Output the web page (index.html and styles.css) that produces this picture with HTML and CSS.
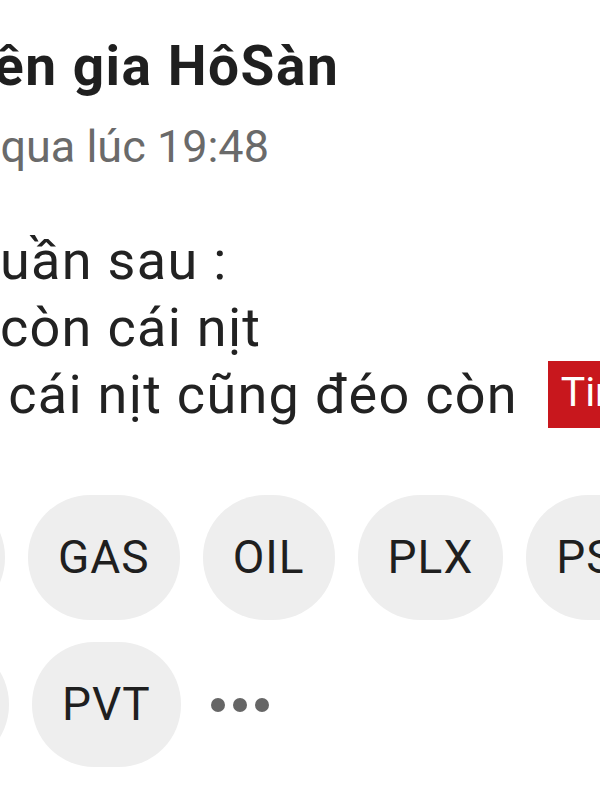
FILE: index.html
```html
<!DOCTYPE html>
<html lang="vi">
<head>
    <meta charset="UTF-8">
    <meta name="viewport" content="width=device-width, initial-scale=1.0">
    <title>Chuyên gia HôSàn</title>
    <link rel="stylesheet" href="styles.css">
</head>
<body>

<div class="post">
    <div class="post-head">
        <div class="author">Chuyên gia HôSàn</div>
        <div class="time">Hôm qua lúc 19:48</div>
    </div>
    <div class="post-body">
        <div class="line">Tuần sau :</div>
        <div class="line">- còn cái nịt</div>
        <div class="line">* cái nịt cũng đéo còn <span class="tag">Tin nóng</span></div>
    </div>
    <div class="tickers">
        <div class="chip-row first">
            <span class="chip cut">BSR</span>
            <span class="chip">GAS</span>
            <span class="chip">OIL</span>
            <span class="chip">PLX</span>
            <span class="chip">PSH</span>
        </div>
        <div class="chip-row second">
            <span class="chip cut">PVS</span>
            <span class="chip">PVT</span>
            <span class="more"><i></i><i></i><i></i></span>
        </div>
    </div>
</div>

</body>
</html>
```

FILE: styles.css
```css
html, body {
    margin: 0;
    overflow: hidden;
}
body {
    font-family: Roboto, "Liberation Sans", sans-serif;
    background: #ffffff;
    color: #222222;
    width: 600px;
    height: 800px;
}
.post {
    white-space: nowrap;
}
.post-head {
    padding-top: 31px;
}
.author {
    margin-left: -137px;
    font-size: 55px;
    font-weight: 700;
    letter-spacing: 1.5px;
    line-height: 70px;
    color: #1f1f1f;
}
.time {
    margin-left: -108px;
    margin-top: 11px;
    font-size: 45px;
    line-height: 70px;
    color: #6a6a6a;
}
.post-body {
    margin-left: -31px;
    margin-top: 45px;
    font-size: 54px;
    letter-spacing: 1.3px;
    line-height: 67px;
}
.tag {
    display: inline-block;
    vertical-align: top;
    height: 67px;
    line-height: 62px;
    margin-left: 15px;
    padding: 0 13px;
    font-size: 41px;
    letter-spacing: 0;
    color: #ffffff;
    background: #c8171d;
}
.tickers {
    margin-top: 67px;
    display: flex;
    flex-direction: column;
    gap: 22px;
}
.chip-row {
    display: flex;
    align-items: center;
    gap: 23px;
}
.chip {
    flex: none;
    height: 125px;
    line-height: 125px;
    padding: 0 30px;
    border-radius: 62px;
    background: #eeeeee;
    font-size: 46px;
    letter-spacing: 1px;
    color: #1f1f1f;
}
.chip.cut {
    box-sizing: border-box;
    width: 140px;
    padding: 0;
    text-align: center;
}
.first .cut {
    margin-left: -135px;
}
.second .cut {
    margin-left: -131px;
}
.more {
    display: flex;
    gap: 8px;
    margin-left: 7px;
}
.more i {
    width: 14px;
    height: 14px;
    border-radius: 50%;
    background: #666666;
}
```
